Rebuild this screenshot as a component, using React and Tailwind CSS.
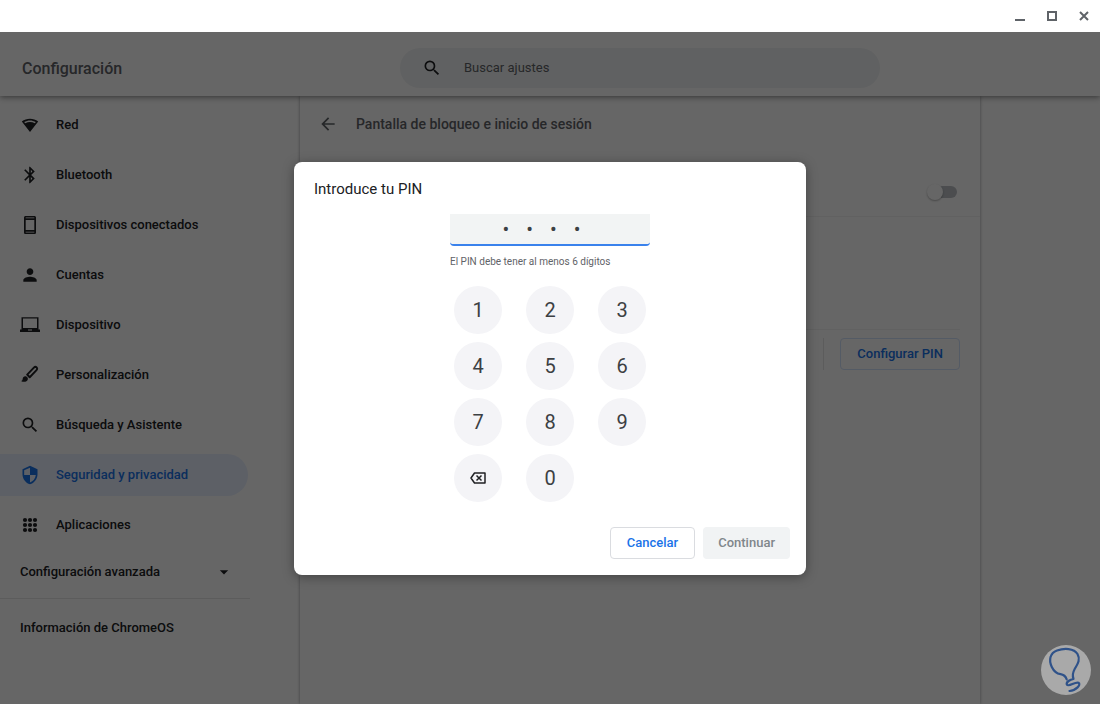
import { useState } from 'react'
import { MdArrowBack, MdArrowDropDown, MdBluetooth, MdPerson, MdSearch, MdSecurity } from 'react-icons/md'

const WifiIcon = ({ className }) => (
    <svg viewBox="0 0 20 20" className={className} fill="currentColor" aria-hidden="true">
        <path fillRule="evenodd" d="M10 17 1.8 6.5C6.500 2.800 13.500 2.800 18.200 6.500L10 17ZM4.200 7 5.200 8.300C8.200 6.700 11.800 6.700 14.800 8.300L15.800 7C12.300 4.900 7.700 4.900 4.200 7Z" />
    </svg>
)

const PhoneIcon = ({ className }) => (
    <svg viewBox="0 0 20 20" className={className} fill="currentColor" aria-hidden="true">
        <path fillRule="evenodd" d="M5.6 1h8.8C15.3 1 16 1.7 16 2.6v14.8c0 .9-.7 1.6-1.6 1.6H5.6C4.7 19 4 18.3 4 17.4V2.6C4 1.7 4.7 1 5.6 1ZM5.700 2.500v.8h8.600v-.8ZM5.700 5v10h8.600V5ZM5.700 16.700v.8h8.600v-.8Z" />
    </svg>
)

const LaptopIcon = ({ className }) => (
    <svg viewBox="0 0 20 20" className={className} fill="currentColor" aria-hidden="true">
        <path fillRule="evenodd" d="M1.500 2.200h17v12.300H20V17H0v-2.500h1.500ZM3 3.600v9.400h14V3.600ZM8 14.600v.8h4v-.8Z" />
    </svg>
)

const BrushIcon = ({ className }) => (
    <svg viewBox="0 0 20 20" className={className} fill="none" aria-hidden="true">
        <path d="M7.200 9.600 13.900 2.600c.8-.8 2-.9 2.700-.2.800.8.700 1.900-.1 2.700L9.700 12.200Z" stroke="currentColor" strokeWidth="2" strokeLinejoin="round" />
        <path d="M1 16c1.300-.2 1.600-1 1.700-2.200.1-1.700 1.500-2.800 3-2.500 1.600.3 2.500 1.700 2.100 3.200-.6 2.400-4.200 3.100-6.800 1.500Z" fill="currentColor" />
    </svg>
)

const AppsIcon = ({ className }) => (
    <svg viewBox="0 0 20 20" className={className} fill="currentColor" aria-hidden="true">
        {[5, 10, 15].map((y) => [5, 10, 15].map((x) => <circle key={`${x}-${y}`} cx={x} cy={y} r="2.100" />))}
    </svg>
)

const BackspaceIcon = ({ className }) => (
    <svg viewBox="0 0 16 12" className={className} fill="none" stroke="currentColor" strokeWidth="1.500" aria-hidden="true">
        <path d="M4.500 1h10.500v10H4.500L1 6Z" strokeLinejoin="round" />
        <path d="m6.500 3.500 5 5m0-5-5 5" />
    </svg>
)

const menuItems = [
    { label: 'Red', icon: WifiIcon },
    { label: 'Bluetooth', icon: MdBluetooth },
    { label: 'Dispositivos conectados', icon: PhoneIcon },
    { label: 'Cuentas', icon: MdPerson },
    { label: 'Dispositivo', icon: LaptopIcon },
    { label: 'Personalización', icon: BrushIcon },
    { label: 'Búsqueda y Asistente', icon: MdSearch },
    { label: 'Seguridad y privacidad', icon: MdSecurity, selected: true },
    { label: 'Aplicaciones', icon: AppsIcon },
]

const WindowBar = () => (
    <div className="flex h-8 justify-end bg-white text-[#5f6368]">
        <button type="button" aria-label="Minimizar" className="flex w-8 items-center justify-center">
            <svg viewBox="0 0 10 10" className="size-[10px]" fill="currentColor"><path d="M0 8h10v2H0z" /></svg>
        </button>
        <button type="button" aria-label="Maximizar" className="flex w-8 items-center justify-center">
            <svg viewBox="0 0 10 10" className="size-[10px]" fill="none" stroke="currentColor" strokeWidth="2"><path d="M1 1h8v8H1z" /></svg>
        </button>
        <button type="button" aria-label="Cerrar" className="flex w-8 items-center justify-center">
            <svg viewBox="0 0 10 10" className="size-[10px]" fill="none" stroke="currentColor" strokeWidth="2"><path d="m1 1 8 8m0-8L1 9" /></svg>
        </button>
    </div>
)

const Header = () => (
    <header className="relative flex h-16 items-center bg-white shadow-[0_1px_6px_rgba(0,0,0,0.5)]">
        <h1 className="w-[400px] shrink-0 pt-[10px] pl-[22px] text-base font-medium text-[#5f6368]">Configuración</h1>
        <label className="mt-2 flex h-10 max-w-[480px] flex-1 items-center rounded-full bg-[#f1f3f4] pr-5 pl-[22px] text-[#202124]">
            <MdSearch className="size-5 shrink-0" />
            <input
                type="search"
                aria-label="Buscar ajustes"
                placeholder="Buscar ajustes"
                className="ml-[22px] w-full bg-transparent text-[13px] outline-none placeholder:text-[#5f6368]"
            />
        </label>
    </header>
)

const Sidebar = () => (
    <nav className="w-[300px] shrink-0 pt-2 text-[13px] font-medium text-[#202124]">
        <ul className="flex w-[248px] flex-col gap-2">
            {menuItems.map(({ label, icon: Icon, selected }) => (
                <li key={label}>
                    <a
                        href="#"
                        className={`flex h-[42px] items-center gap-4 rounded-r-full pl-5 ${selected ? 'bg-[#e8f0fe] text-[#1a73e8]' : ''}`}
                    >
                        <Icon className="size-5" />
                        {label}
                    </a>
                </li>
            ))}
        </ul>
        <div className="w-[250px] border-b border-black/10">
            <button type="button" className="flex h-[52px] w-full items-center justify-between pr-4 pl-5">
                Configuración avanzada
                <MdArrowDropDown className="size-5" />
            </button>
        </div>
        <a href="#" className="mt-2 flex h-[42px] items-center pl-5">Información de ChromeOS</a>
    </nav>
)

const LockScreenPage = () => {
    const [locked, setLocked] = useState(false)

    return (
        <main className="max-w-[680px] flex-1 bg-white shadow-[0_0_3px_rgba(60,64,67,0.5)]">
            <div className="flex h-14 items-center gap-[18px] pl-[18px] text-[#5f6368]">
                <button type="button" aria-label="Atrás">
                    <MdArrowBack className="size-5" />
                </button>
                <h2 className="text-sm font-medium">Pantalla de bloqueo e inicio de sesión</h2>
            </div>
            <div className="mt-4 flex h-[49px] items-center justify-end border-b border-black/5 pr-[23px]">
                <input
                    type="checkbox"
                    role="switch"
                    aria-label="Bloqueo de pantalla"
                    checked={locked}
                    onChange={(e) => setLocked(e.target.checked)}
                    className="relative h-3 w-7 appearance-none rounded-full bg-[#bdc1c6] before:absolute before:-top-0.5 before:-left-0.5 before:size-4 before:rounded-full before:bg-white before:shadow-[0_1px_2px_rgba(0,0,0,0.3)] checked:before:left-3.5"
                />
            </div>
            {/* PIN row */}
            <div className="mx-5 mt-28 flex justify-end gap-4 border-t border-black/5 pt-2">
                <div className="w-px bg-black/10" />
                <button type="button" className="h-8 rounded border border-[#d2e3fc] px-4 text-[13px] font-medium text-[#1a73e8]">
                    Configurar PIN
                </button>
            </div>
        </main>
    )
}

const PinDialog = () => {
    const [pin, setPin] = useState('1234')

    const keyClass = 'flex size-12 items-center justify-center rounded-full bg-[#f4f4f7] text-xl text-[#3c4043]'

    return (
        <div
            role="dialog"
            aria-labelledby="pin-title"
            className="w-[512px] rounded-lg bg-white p-4 shadow-[0_2px_12px_rgba(0,0,0,0.35)]"
        >
            <h2 id="pin-title" className="pl-1 text-[15px] leading-[22px] text-[#202124]">Introduce tu PIN</h2>
            <div className="mx-auto mt-[14px] w-[200px]">
                <input
                    type="password"
                    aria-label="PIN"
                    aria-describedby="pin-hint"
                    value={pin}
                    onChange={(e) => setPin(e.target.value)}
                    className="block h-8 w-full rounded-b border-b-2 border-[#3a82ec] bg-[#f2f4f4] text-center text-xl tracking-[17px] text-[#3c4043] outline-none"
                />
                <p id="pin-hint" className="mt-2 text-[10px] leading-4 text-[#5f6368]">El PIN debe tener al menos 6 dígitos</p>
                <div className="mt-4 grid grid-cols-3 gap-x-6 gap-y-2 px-1">
                    {[1, 2, 3, 4, 5, 6, 7, 8, 9].map((digit) => (
                        <button key={digit} type="button" className={keyClass} onClick={() => setPin(pin + digit)}>
                            {digit}
                        </button>
                    ))}
                    <button type="button" aria-label="Borrar" className={keyClass} onClick={() => setPin(pin.slice(0, -1))}>
                        <BackspaceIcon className="h-3 w-4 text-[#202124]" />
                    </button>
                    <button type="button" className={keyClass} onClick={() => setPin(pin + '0')}>0</button>
                </div>
            </div>
            <div className="mt-[25px] flex justify-end gap-2 text-[13px] font-medium">
                <button type="button" className="h-8 rounded border border-[#dadce0] px-4 text-[#1a73e8]">Cancelar</button>
                <button type="button" disabled={pin.length < 6} className="h-8 rounded bg-[#f1f3f4] px-[15px] text-[#80868b]">Continuar</button>
            </div>
        </div>
    )
}

const BulbBadge = () => (
    <svg viewBox="0 0 50 50" className="absolute right-[9px] bottom-[9px] size-[50px]" fill="none" aria-hidden="true">
        <circle cx="25" cy="25" r="25" fill="#a9a9a9" />
        <path
            d="M25.700 34.300C24.500 31 22 29.600 19.500 29.200C15 28.500 12.500 25.500 10.800 22C7.500 15 9 8 16 5.500C23 3 33 3 36.500 9C40 15 36 20 33.700 24C31.500 28 31.300 31 32.500 34C29 34.500 25 37 25.800 39.500C27.500 42.500 34 36.500 37.500 37.800C40.500 39.500 35 45.500 28.500 46"
            stroke="#2f5289"
            strokeWidth="2.200"
            strokeLinecap="round"
            strokeLinejoin="round"
        />
    </svg>
)

export default function App() {
    return (
        <div className="flex min-h-screen flex-col bg-white font-['Roboto',sans-serif]">
            <WindowBar />
            <div className="relative flex flex-1 flex-col overflow-hidden">
                <Header />
                <div className="flex flex-1">
                    <Sidebar />
                    <LockScreenPage />
                </div>
                <div className="absolute inset-0 flex items-center justify-center bg-black/60">
                    <PinDialog />
                    <BulbBadge />
                </div>
            </div>
        </div>
    )
}
